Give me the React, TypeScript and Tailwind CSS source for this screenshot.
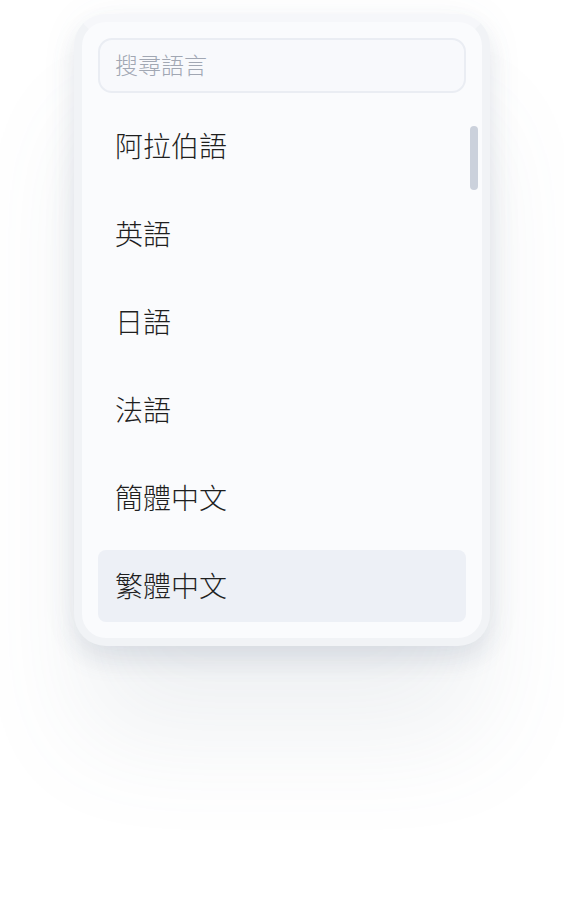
import { useState } from 'react'

const languages = ['阿拉伯語', '英語', '日語', '法語', '簡體中文', '繁體中文']

export default function App() {
  const [query, setQuery] = useState('')
  const [selected, setSelected] = useState('繁體中文')

  return (
    <div
      className="min-h-screen bg-white flex justify-center pt-[14px]"
      style={{ fontFamily: '"Noto Sans CJK TC Light", "Noto Sans CJK TC DemiLight", "Noto Sans CJK TC", "Noto Sans", sans-serif' }}
    >
      <div className="w-[416px] h-[632px] border-8 border-[#f1f3f6] border-t-[#f6f7fa] rounded-[32px] bg-[#fafbfd] p-4 flex flex-col shadow-[0_14px_24px_rgba(100,116,139,0.14),0_100px_110px_-10px_rgba(100,116,139,0.10),0_0_40px_rgba(100,116,139,0.05)]">
        <input
          value={query}
          onChange={(e) => setQuery(e.target.value)}
          placeholder="搜尋語言"
          className="h-[55px] w-full rounded-[14px] border-2 border-[#eaedf3] bg-[#f8f9fc] px-[15px] pb-[3px] text-[23px] font-extralight text-[#222] placeholder:text-[#a1a7b3] outline-none"
        />
        <div className="relative mt-[17px] flex-1">
          <ul className="flex flex-col gap-4">
            {languages
              .filter((l) => l.includes(query))
              .map((lang) => (
                <li
                  key={lang}
                  onClick={() => setSelected(lang)}
                  className={`h-[72px] flex items-center pl-[17px] pb-[2px] rounded-lg text-[28px] font-extralight text-[#1f1f1f] cursor-pointer ${
                    selected === lang ? 'bg-[#edf0f6]' : ''
                  }`}
                >
                  {lang}
                </li>
              ))}
          </ul>
          <span className="absolute -right-3 top-4 h-16 w-2 rounded-full bg-[#cbd1dc]" />
        </div>
      </div>
    </div>
  )
}
